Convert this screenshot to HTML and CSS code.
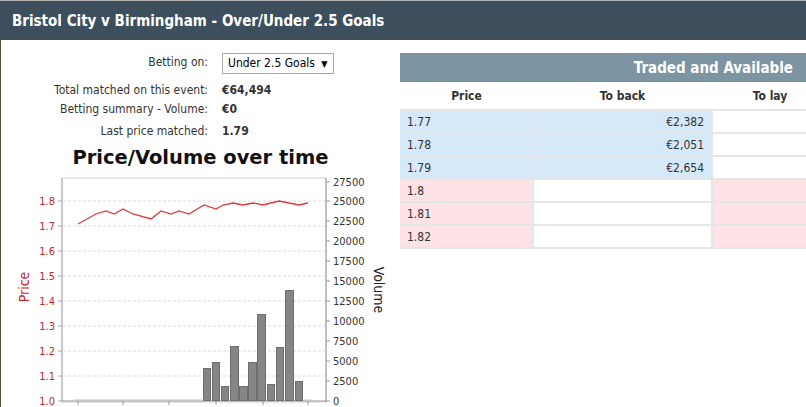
FILE: index.html
```html
<!DOCTYPE html>
<html lang="en">
<head>
  <meta charset="UTF-8" />
  <title>Bristol City v Birmingham - Over/Under 2.5 Goals</title>
  <link rel="stylesheet" href="styles.css">
</head>
<body>
  <div class="topbar">
    <h1>Bristol City v Birmingham - Over/Under 2.5 Goals</h1>
  </div>

  <div class="main">
    <div class="left">
      <div class="info">
        <div class="label first">Betting on:</div>
        <div class="value">
          <div class="select">Under 2.5 Goals <span class="arrow">&#9660;</span></div>
        </div>
        <div class="label">Total matched on this event:</div>
        <div class="value strong">&euro;64,494</div>
        <div class="label">Betting summary - Volume:</div>
        <div class="value strong">&euro;0</div>
        <div class="label">Last price matched:</div>
        <div class="value strong">1.79</div>
      </div>

      <div class="chart-title">Price/Volume over time</div>

      <svg class="chart" width="399" height="237" viewBox="0 170 399 237">
        <rect x="61" y="178" width="264" height="224" fill="#fff" stroke="#cfcfcf"/>
        <g stroke="#dcdcdc" stroke-dasharray="3,2">
          <line x1="62" y1="201" x2="324" y2="201"/>
          <line x1="62" y1="226" x2="324" y2="226"/>
          <line x1="62" y1="251" x2="324" y2="251"/>
          <line x1="62" y1="276" x2="324" y2="276"/>
          <line x1="62" y1="301" x2="324" y2="301"/>
          <line x1="62" y1="326" x2="324" y2="326"/>
          <line x1="62" y1="351" x2="324" y2="351"/>
          <line x1="62" y1="376" x2="324" y2="376"/>
        </g>
        <line x1="61" y1="178" x2="61" y2="402" stroke="#aaa"/>
        <line x1="325" y1="178" x2="325" y2="402" stroke="#999"/>
        <line x1="61" y1="401" x2="325" y2="401" stroke="#999"/>

        <g stroke="#aaa">
          <line x1="57" y1="201" x2="61" y2="201"/>
          <line x1="57" y1="226" x2="61" y2="226"/>
          <line x1="57" y1="251" x2="61" y2="251"/>
          <line x1="57" y1="276" x2="61" y2="276"/>
          <line x1="57" y1="301" x2="61" y2="301"/>
          <line x1="57" y1="326" x2="61" y2="326"/>
          <line x1="57" y1="351" x2="61" y2="351"/>
          <line x1="57" y1="376" x2="61" y2="376"/>
          <line x1="57" y1="401" x2="61" y2="401"/>
        </g>
        <g class="axis-price" text-anchor="end">
          <text x="54" y="205">1.8</text>
          <text x="54" y="230">1.7</text>
          <text x="54" y="255">1.6</text>
          <text x="54" y="280">1.5</text>
          <text x="54" y="305">1.4</text>
          <text x="54" y="330">1.3</text>
          <text x="54" y="355">1.2</text>
          <text x="54" y="380">1.1</text>
          <text x="54" y="405">1.0</text>
        </g>

        <g stroke="#999">
          <line x1="325" y1="182" x2="329" y2="182"/>
          <line x1="325" y1="201" x2="329" y2="201"/>
          <line x1="325" y1="221" x2="329" y2="221"/>
          <line x1="325" y1="241" x2="329" y2="241"/>
          <line x1="325" y1="261" x2="329" y2="261"/>
          <line x1="325" y1="281" x2="329" y2="281"/>
          <line x1="325" y1="301" x2="329" y2="301"/>
          <line x1="325" y1="321" x2="329" y2="321"/>
          <line x1="325" y1="341" x2="329" y2="341"/>
          <line x1="325" y1="361" x2="329" y2="361"/>
          <line x1="325" y1="381" x2="329" y2="381"/>
          <line x1="325" y1="401" x2="329" y2="401"/>
        </g>
        <g class="axis-volume">
          <text x="332" y="186">27500</text>
          <text x="332" y="205">25000</text>
          <text x="332" y="225">22500</text>
          <text x="332" y="245">20000</text>
          <text x="332" y="265">17500</text>
          <text x="332" y="285">15000</text>
          <text x="332" y="305">12500</text>
          <text x="332" y="325">10000</text>
          <text x="332" y="345">7500</text>
          <text x="332" y="365">5000</text>
          <text x="332" y="385">2500</text>
          <text x="332" y="405">0</text>
        </g>

        <text class="axis-name price" transform="translate(28 287) rotate(-90)" text-anchor="middle">Price</text>
        <text class="axis-name" transform="translate(373 290) rotate(90)" text-anchor="middle">Volume</text>

        <g stroke="#999">
          <line x1="77" y1="401" x2="77" y2="405"/>
          <line x1="122" y1="401" x2="122" y2="405"/>
          <line x1="168" y1="401" x2="168" y2="405"/>
          <line x1="215" y1="401" x2="215" y2="405"/>
          <line x1="262" y1="401" x2="262" y2="405"/>
          <line x1="307" y1="401" x2="307" y2="405"/>
        </g>

        <rect x="73" y="399.5" width="128" height="1" fill="#c4c4c4"/>
        <rect x="303" y="399.5" width="7" height="1" fill="#c4c4c4"/>
        <g fill="#858585" stroke="#6e6e6e">
          <rect x="202.5" y="368.5" width="7" height="32"/>
          <rect x="211.5" y="362.5" width="7" height="38"/>
          <rect x="220.5" y="386.5" width="7" height="14"/>
          <rect x="229.5" y="346.5" width="8" height="54"/>
          <rect x="238.5" y="386.5" width="8" height="14"/>
          <rect x="247.5" y="362.5" width="8" height="38"/>
          <rect x="256.5" y="314.5" width="8" height="86"/>
          <rect x="266.5" y="384.5" width="7" height="16"/>
          <rect x="275.5" y="347.5" width="7" height="53"/>
          <rect x="284.5" y="290.5" width="8" height="110"/>
          <rect x="294.5" y="381.5" width="7" height="19"/>
        </g>

        <polyline fill="none" stroke="#e03a3a" stroke-width="1.3"
          points="77,224 95,214 105,211 113,214 122,209 132,214 150,219 160,211 170,214 178,211 188,214 203,205 215,209 222,205 232,203 242,205 252,203 262,205 278,201 288,203 298,205 307,203"/>
      </svg>
    </div>

    <div class="right">
      <div class="traded">Traded and Available</div>
      <table class="book">
        <thead>
          <tr><th class="c-price">Price</th><th class="c-back">To back</th><th class="c-lay">To lay</th></tr>
        </thead>
        <tbody>
          <tr class="back"><td>1.77</td><td class="num">&euro;2,382</td><td></td></tr>
          <tr class="back"><td>1.78</td><td class="num">&euro;2,051</td><td></td></tr>
          <tr class="back"><td>1.79</td><td class="num">&euro;2,654</td><td></td></tr>
          <tr class="lay"><td>1.8</td><td></td><td></td></tr>
          <tr class="lay"><td>1.81</td><td></td><td></td></tr>
          <tr class="lay"><td>1.82</td><td></td><td></td></tr>
        </tbody>
      </table>
    </div>
  </div>
</body>
</html>
```

FILE: styles.css
```css
body {
  margin: 0;
  font-family: "DejaVu Sans", Verdana, sans-serif;
  font-stretch: condensed;
  font-size: 12px;
  color: #333;
  background: #fff;
  overflow: hidden;
}
.topbar {
  border-top: 1px solid #b4b4b4;
  background-color: #3d4f5d;
  height: 39px;
}
.topbar h1 {
  margin: 0;
  padding: 11px 0 0 12px;
  font-size: 15px;
  color: #fff;
  font-weight: bold;
}
.main {
  display: flex;
  border-left: 1px solid #5b4c2f;
  height: 367px;
}
.left {
  width: 399px;
  flex-shrink: 0;
}
.info {
  display: grid;
  grid-template-columns: 207px auto;
  grid-template-rows: 24px 26px 19px 22px;
  column-gap: 14px;
  padding-top: 10px;
  align-items: end;
  line-height: 20px;
}
.label {
  text-align: right;
}
.label.first {
  align-self: center;
}
.strong {
  font-weight: bold;
}
.select {
  display: inline-block;
  border: 1px solid #a9a9a9;
  height: 19px;
  line-height: 19px;
  padding: 0 5px;
  color: #000;
}
.arrow {
  font-size: 9px;
  margin-left: 3px;
}
.chart-title {
  text-align: center;
  font-size: 19.5px;
  font-weight: bold;
  color: #111;
  font-stretch: normal;
  margin-top: 5px;
  height: 24px;
  line-height: 24px;
}
.chart {
  display: block;
}
.chart text {
  font-family: "DejaVu Sans", sans-serif;
  font-size: 11px;
}
.axis-price text {
  fill: #c4262d;
}
.axis-volume text {
  fill: #333;
}
.chart .axis-name {
  font-size: 14px;
  fill: #222;
}
.chart .axis-name.price {
  fill: #c4262d;
}
.right {
  width: 406px;
  overflow: hidden;
  padding-top: 13px;
}
.traded {
  background-color: #7d95a3;
  color: #fff;
  font-weight: bold;
  font-size: 15px;
  text-align: right;
  padding-right: 13px;
  height: 29px;
  line-height: 31px;
}
.book {
  border-collapse: collapse;
  width: 422px;
  table-layout: fixed;
}
.book th {
  font-weight: bold;
  height: 25px;
  text-align: center;
  color: #333;
}
.c-price { width: 131px; }
.c-back { width: 177px; }
.c-lay { width: 114px; }
.book td {
  height: 21px;
  padding: 0 7px;
  border-right: 2px solid #e4e6e8;
  border-bottom: 2px solid #e4e6e8;
  background: #fff;
}
.book td.num {
  text-align: right;
}
.back td:first-child,
.back td:nth-child(2) {
  background-color: #d6e9fb;
}
.lay td:first-child,
.lay td:nth-child(3) {
  background-color: #fde3e6;
}
.book tbody tr:first-child td {
  border-top: 2px solid #e4e6e8;
}
```
